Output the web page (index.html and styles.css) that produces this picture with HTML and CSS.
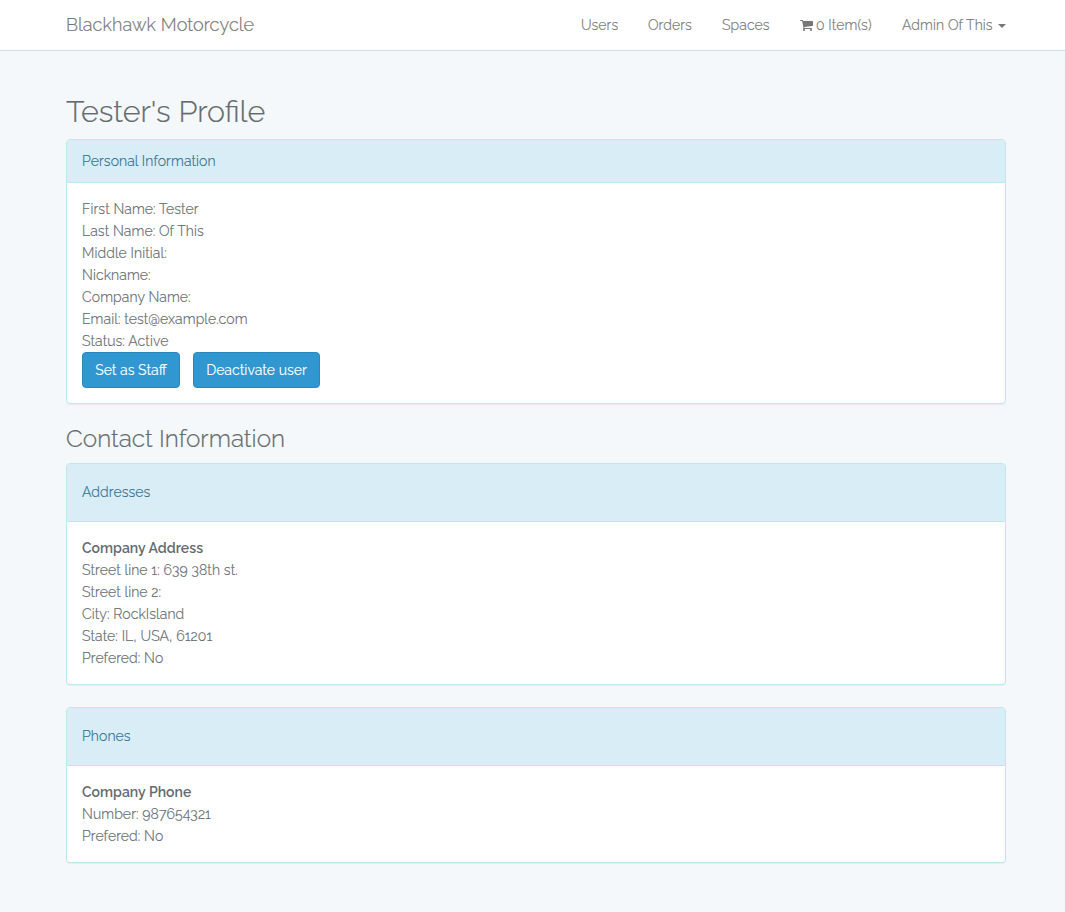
FILE: index.html
```html
<!DOCTYPE html>
<html lang="en">
<head>
<meta charset="utf-8">
<title>Blackhawk Motorcycle</title>
<link rel="stylesheet" href="styles.css">
</head>
<body>
<nav class="navbar">
  <div class="container navbar-inner">
    <a class="brand">Blackhawk Motorcycle</a>
    <div class="links">
      <a class="w-users">Users</a>
      <a class="w-orders">Orders</a>
      <a class="w-spaces">Spaces</a>
      <a class="w-cart"><svg class="cart" viewBox="0 0 1664 1536"><path d="M640 1408q0 52-38 90t-90 38-90-38-38-90 38-90 90-38 90 38 38 90zm896 0q0 52-38 90t-90 38-90-38-38-90 38-90 90-38 90 38 38 90zm128-1088v512q0 24-16.500 42.500t-40.500 21.500l-1044 122q13 60 13 70 0 16-24 64h920q26 0 45 19t19 45-19 45-45 19h-1024q-26 0-45-19t-19-45q0-11 8-31.500t16-36 21.500-40 15.500-29.500l-177-823h-204q-26 0-45-19t-19-45 19-45 45-19h256q16 0 28.500 6.500t19.500 15.500 13 24.500 8 26 5.500 29.500 4.500 26h1201q26 0 45 19t19 45z"/></svg><span>0 Item(s)</span></a>
      <a class="w-admin"><span>Admin Of This</span><i class="caret"></i></a>
    </div>
  </div>
</nav>
<main class="container">
  <h1>Tester's Profile</h1>
  <section class="panel">
    <header>Personal Information</header>
    <div class="body">
      <p>First Name: Tester</p>
      <p>Last Name: Of This</p>
      <p>Middle Initial:</p>
      <p>Nickname:</p>
      <p>Company Name:</p>
      <p>Email: test@example.com</p>
      <p>Status: Active</p>
      <div class="actions">
        <button class="btn btn-staff">Set as Staff</button>
        <button class="btn btn-deactivate">Deactivate user</button>
      </div>
    </div>
  </section>
  <h3>Contact Information</h3>
  <section class="panel">
    <header class="tall">Addresses</header>
    <div class="body">
      <p><strong>Company Address</strong></p>
      <p>Street line 1: 639 38th st.</p>
      <p>Street line 2:</p>
      <p>City: RockIsland</p>
      <p>State: IL, USA, 61201</p>
      <p>Prefered: No</p>
    </div>
  </section>
  <section class="panel">
    <header class="tall">Phones</header>
    <div class="body">
      <p><strong>Company Phone</strong></p>
      <p>Number: 987654321</p>
      <p>Prefered: No</p>
    </div>
  </section>
</main>
</body>
</html>
```
FILE: styles.css
```css
* { box-sizing: border-box; }
body {
  margin: 0;
  background: #f5f8fa;
  color: #636b6f;
  font: 300 14px/22px Raleway, Lato, "Open Sans", sans-serif;
  letter-spacing: 0.11px;
  -webkit-text-stroke: 0.2px;
}
p { margin: 0; white-space: nowrap; }
.container { width: 940px; margin-left: 66px; }
.navbar { height: 51px; background: #fff; border-bottom: 1px solid #d3e0e9; color: #777; margin-bottom: 44px; }
.navbar-inner { display: flex; justify-content: space-between; height: 50px; align-items: center; }
.brand { font-size: 18px; }
.links { display: flex; gap: 30px; white-space: nowrap; }
.links a { display: flex; align-items: center; }
.w-users { width: 37px; }
.w-orders { width: 44px; }
.w-spaces { width: 48px; }
.w-cart { width: 72px; gap: 3px; }
.w-admin { width: 104px; justify-content: space-between; }
.cart { width: 13px; height: 12px; fill: #777; flex: none; }
.caret { border-top: 4px solid #777; border-left: 4px solid transparent; border-right: 4px solid transparent; margin-top: 2px; }
h1, h3 { font-weight: 300; margin: 0 0 11px; letter-spacing: 0; }
h1 { font-size: 30.4px; line-height: 33px; }
h3 { font-size: 24.3px; line-height: 26px; }
.panel { background: #fff; border: 1px solid #bce8f1; border-radius: 4px; box-shadow: 0 1px 1px rgba(0,0,0,.05); margin-bottom: 22px; }
.panel header { padding: 10px 15px; background: #d9edf7; color: #31708f; border-bottom: 1px solid #bce8f1; border-radius: 3px 3px 0 0; }
.panel .tall { padding: 17px 15px 18px; }
.body { padding: 15px; }
strong { font-weight: 600; letter-spacing: 0.04px; -webkit-text-stroke: 0; }
.actions { display: flex; gap: 13px; }
.btn { height: 36px; padding: 0; border: 1px solid #2a88bd; border-radius: 4px; background: #3097d1; color: #fff; font: inherit; font-weight: 400; white-space: nowrap; letter-spacing: 0; -webkit-text-stroke: 0.1px; }
.btn-staff { width: 98px; }
.btn-deactivate { width: 127px; }
```
